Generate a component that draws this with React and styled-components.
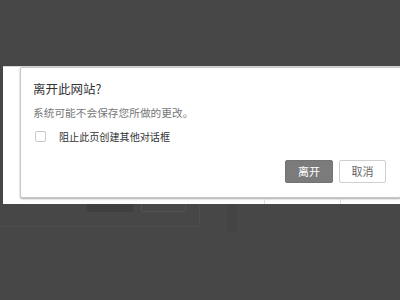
import React from "react";
import styled, { createGlobalStyle } from "styled-components";

const Global = createGlobalStyle`
  html, body { margin: 0; padding: 0; background: #474747; }
  body { width: 400px; height: 300px; overflow: hidden; }
  * { box-sizing: border-box; }
`;

const Page = styled.div`
  width: 400px;
  height: 300px;
  background: #474747;
  padding-top: 66px;
  overflow: hidden;
  font-family: "Noto Sans CJK SC", "Noto Sans", sans-serif;
`;

const Band = styled.div`
  margin-left: 3px;
  width: 400px;
  height: 138px;
  background: #ffffff;
  border-top: 1px solid #d6d6d6;
  padding-left: 17px;
  display: flex;
  flex-direction: column;
  position: relative;
`;

const Dialog = styled.div`
  width: 381px;
  height: 131px;
  background: #fff;
  border: 1px solid #c8c8c8;
  border-radius: 2px;
  box-shadow: 0 1px 2px rgba(0, 0, 0, 0.35);
  padding: 13px 14px 13px 12px;
  display: flex;
  flex-direction: column;
`;

const Title = styled.div`
  font-size: 12.5px;
  line-height: 16px;
  color: #333;
`;

const Desc = styled.div`
  margin-top: 9px;
  font-size: 10.7px;
  line-height: 14px;
  color: #777;
`;

const CheckRow = styled.label`
  margin-top: 9px;
  display: flex;
  align-items: center;
  gap: 13px;
  height: 14px;
  padding-left: 2px;
  font-size: 10.1px;
  color: #333;
`;

const Box = styled.span`
  width: 11px;
  height: 11px;
  border: 1px solid #c9c9c9;
  border-radius: 2px;
  background: #fff;
`;

const Actions = styled.div`
  margin-top: 17px;
  display: flex;
  justify-content: flex-end;
  gap: 6px;
`;

const Button = styled.button`
  height: 23px;
  width: ${(p) => p.$w}px;
  border-radius: 2px;
  font-family: inherit;
  font-size: 11px;
  line-height: 1;
  padding: 0;
  cursor: pointer;
  background: ${(p) => (p.$primary ? "#7b7b7b" : "#fff")};
  color: ${(p) => (p.$primary ? "#fff" : "#666")};
  border: 1px solid ${(p) => (p.$primary ? "#737373" : "#cfcfcf")};
`;

const UnderLine = styled.span`
  position: absolute;
  bottom: 0;
  width: 1px;
  height: 5px;
  background: #dedede;
  left: ${(p) => p.$x}px;
`;

const Ghost = styled.div`
  display: flex;
  align-items: flex-start;
`;

const GhostPanel = styled.div`
  width: 200px;
  height: 23px;
  border-right: 1px solid #4e4e4e;
  border-bottom: 1px solid #4e4e4e;
  border-bottom-right-radius: 2px;
  display: flex;
  gap: 8px;
  padding-left: 87px;
`;

const GhostButton = styled.div`
  width: ${(p) => p.$w}px;
  height: 8px;
  background: ${(p) => (p.$dark ? "#3f3f3f" : "transparent")};
  border: 1px solid ${(p) => (p.$dark ? "#3f3f3f" : "#545454")};
  border-top: none;
  border-radius: 0 0 2px 2px;
`;

const GhostColumn = styled.div`
  margin-left: 27px;
  width: 10px;
  height: 28px;
  background: #444;
`;

export default function App() {
  return (
    <>
      <Global />
      <Page>
        <Band>
          <Dialog>
            <Title>离开此网站?</Title>
            <Desc>系统可能不会保存您所做的更改。</Desc>
            <CheckRow>
              <Box />
              阻止此页创建其他对话框
            </CheckRow>
            <Actions>
              <Button $primary $w={48}>离开</Button>
              <Button $w={47}>取消</Button>
            </Actions>
          </Dialog>
          <UnderLine $x={261} />
          <UnderLine $x={337} />
        </Band>
        <Ghost>
          <GhostPanel>
            <GhostButton $dark $w={46} />
            <GhostButton $w={45} />
          </GhostPanel>
          <GhostColumn />
        </Ghost>
      </Page>
    </>
  );
}
